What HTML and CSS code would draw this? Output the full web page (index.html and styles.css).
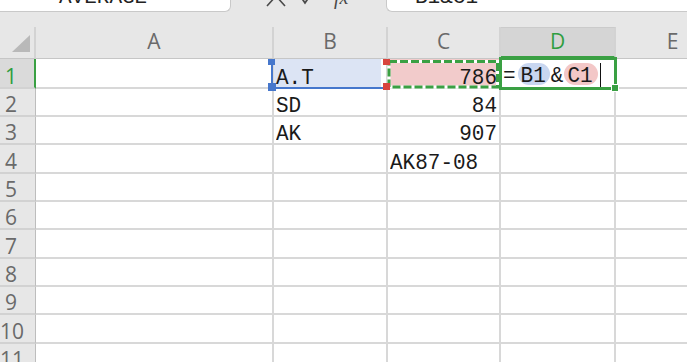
FILE: index.html
```html
<!DOCTYPE html>
<html>
<head>
<meta charset="utf-8">
<link rel="stylesheet" href="styles.css">
</head>
<body>
<div class="app">
  <div class="toolbar">
    <div class="namebox"><span class="tb-text">AVERAGE</span></div>
    <div class="tools">
      <svg class="ico-x" width="24" height="12" viewBox="0 0 24 12"><path d="M3 6 L12 -4 M21 6 L12 -4" stroke="#4a4a4a" stroke-width="1.6" fill="none"/></svg>
      <svg class="ico-ok" width="20" height="12" viewBox="0 0 20 12"><path d="M2 -6 L8 3 L18 -12" stroke="#4a4a4a" stroke-width="1.8" fill="none"/></svg>
      <span class="ico-fx">fx</span>
    </div>
    <div class="fbox"><span class="tb-text">B1&amp;C1</span></div>
  </div>
  <div class="band"></div>
  <div class="sheet">
    <div class="ch corner"><svg width="34" height="31" viewBox="0 0 34 31"><polygon points="12,25 30,25 30,8" fill="#b9b9b9"/></svg></div>
    <div class="ch">A</div>
    <div class="ch">B</div>
    <div class="ch">C</div>
    <div class="ch on">D</div>
    <div class="ch">E</div>

    <div class="rh on"><span>1</span></div>
    <div class="c"></div>
    <div class="c fill-b"><span class="t">A.T</span>
      <svg class="rng rng-b" width="120" height="32" viewBox="0 0 120 32"><rect x="3" y="0" width="2" height="29" fill="#4677cc"/><rect x="0" y="0" width="7" height="6" fill="#4677cc"/><rect x="0" y="24" width="8" height="8" fill="#4677cc"/><rect x="5" y="28" width="110" height="2" fill="#4677cc"/></svg>
    </div>
    <div class="c r fill-r"><span class="t">786</span>
      <svg class="rng rng-r" width="118" height="32" viewBox="0 0 118 32"><rect x="7" y="2.5" width="108.5" height="25.5" fill="none" stroke="#ffffff" stroke-width="3"/><rect x="7" y="2.5" width="108.5" height="25.5" fill="none" stroke="#3aa043" stroke-width="3" stroke-dasharray="8 3"/><rect x="1" y="0" width="7" height="6" fill="#d8453e"/><rect x="1" y="24" width="7" height="7" fill="#d8453e"/></svg>
    </div>
    <div class="c d1">
      <div class="fx-edit">
        <span class="t">=</span>
        <span class="pill blue"><span class="t">B1</span></span>
        <span class="t amp">&amp;</span>
        <span class="pill red"><span class="t">C1</span></span>
        <span class="caret"></span>
      </div>
      <div class="sel"></div>
    </div>
    <div class="c"></div>

    <div class="rh"><span>2</span></div>
    <div class="c"></div>
    <div class="c"><span class="t">SD</span></div>
    <div class="c r"><span class="t">84</span></div>
    <div class="c"></div>
    <div class="c"></div>

    <div class="rh"><span>3</span></div>
    <div class="c"></div>
    <div class="c"><span class="t">AK</span></div>
    <div class="c r"><span class="t">907</span></div>
    <div class="c"></div>
    <div class="c"></div>

    <div class="rh"><span>4</span></div>
    <div class="c"></div>
    <div class="c"></div>
    <div class="c"><span class="t">AK87-08</span></div>
    <div class="c"></div>
    <div class="c"></div>

    <div class="rh"><span>5</span></div>
    <div class="c"></div><div class="c"></div><div class="c"></div><div class="c"></div><div class="c"></div>
    <div class="rh"><span>6</span></div>
    <div class="c"></div><div class="c"></div><div class="c"></div><div class="c"></div><div class="c"></div>
    <div class="rh"><span>7</span></div>
    <div class="c"></div><div class="c"></div><div class="c"></div><div class="c"></div><div class="c"></div>
    <div class="rh"><span>8</span></div>
    <div class="c"></div><div class="c"></div><div class="c"></div><div class="c"></div><div class="c"></div>
    <div class="rh"><span>9</span></div>
    <div class="c"></div><div class="c"></div><div class="c"></div><div class="c"></div><div class="c"></div>
    <div class="rh"><span>10</span></div>
    <div class="c"></div><div class="c"></div><div class="c"></div><div class="c"></div><div class="c"></div>
    <div class="rh"><span>11</span></div>
    <div class="c"></div><div class="c"></div><div class="c"></div><div class="c"></div><div class="c"></div>
  </div>
</div>
</body>
</html>
```

FILE: styles.css
```css
html, body {
  margin: 0;
  padding: 0;
}
body {
  width: 687px;
  height: 362px;
  overflow: hidden;
  background: #e7e7e7;
  font-family: "Open Sans", "Noto Sans", sans-serif;
}
.app {
  width: 687px;
  height: 362px;
  overflow: hidden;
}
.toolbar {
  display: flex;
  height: 12px;
  overflow: hidden;
  background: #e7e7e7;
}
.namebox {
  width: 231px;
  box-sizing: border-box;
  background: #fff;
  border-right: 1px solid #c9c9c9;
  border-bottom: 1px solid #c9c9c9;
  border-bottom-right-radius: 6px;
  display: flex;
  align-items: flex-end;
  padding-left: 59px;
}
.tb-text {
  font: 21px/16px "Liberation Mono", monospace;
  color: #222;
  margin-bottom: 5px;
  white-space: nowrap;
}
.tools {
  width: 155px;
  display: flex;
  align-items: flex-start;
  padding-left: 33px;
  box-sizing: border-box;
}
.ico-x { margin-right: 9px; }
.ico-ok { margin-right: 17px; }
.ico-fx {
  font: italic 20px/16px "Liberation Serif", serif;
  color: #4a4a4a;
  margin-top: -11px;
}
.fbox {
  flex: 1;
  background: #fff;
  border-left: 1px solid #c9c9c9;
  border-bottom: 1px solid #c9c9c9;
  border-bottom-left-radius: 6px;
  display: flex;
  align-items: flex-end;
  padding-left: 28px;
}
.band {
  height: 15px;
}
.sheet {
  display: grid;
  grid-template-columns: 36px 238px 114px 113px 115px 115px;
  grid-template-rows: 32px 30px 28px 28px 29px 28px 28px 29px 28px 28px 29px 28px;
  width: 731px;
  background: #fff;
}
.ch {
  background: #e7e7e7;
  border-right: 2px solid #d3d3d3;
  border-bottom: 1px solid #c6c6c6;
  box-sizing: border-box;
  display: flex;
  align-items: center;
  justify-content: center;
  padding-bottom: 3px;
  font-size: 21px;
  color: #6a6a6a;
}
.ch.corner {
  padding: 0;
  align-items: flex-start;
  justify-content: flex-start;
}
.ch.on {
  background: #d5d5d5;
  color: #2f9e3f;
  border-bottom: 3px solid #3aa043;
  border-top: 1px solid #cbcbcb;
}
.rh {
  background: #e7e7e7;
  border-right: 1px solid #bdbdbd;
  border-bottom: 2px solid #d2d2d2;
  box-sizing: border-box;
  display: flex;
  align-items: flex-end;
  padding-bottom: 3px;
  font-size: 21px;
  line-height: 16px;
  color: #6a6a6a;
}
.rh span {
  width: 22px;
  text-align: center;
}
.rh.on {
  background: #dadada;
  color: #2f9e3f;
  border-right: 2px solid #3aa043;
}
.c {
  position: relative;
  border-right: 2px solid #d8d8d8;
  border-bottom: 2px solid #d8d8d8;
  box-sizing: border-box;
  display: flex;
  align-items: flex-end;
  padding: 0 2px;
  font: 21px/16px "Liberation Mono", monospace;
  color: #1a1a1a;
  white-space: nowrap;
}
.c.r {
  justify-content: flex-end;
}
.t {
  display: inline-block;
  transform: scaleY(1.08);
  transform-origin: 50% 13.6px;
}
.fill-b {
  background: #dce4f4;
  box-shadow: inset -5px 0 0 #fff;
}
.fill-r {
  background: #f2cbcb;
}
.rng {
  position: absolute;
  top: 0;
  z-index: 1;
  overflow: visible;
}
.rng-b { left: -6px; }
.rng-r { left: -6px; }
.fx-edit {
  display: flex;
  align-items: flex-end;
  height: 22px;
  margin-bottom: 2px;
}
.pill {
  height: 22px;
  border-radius: 11px;
  display: flex;
  align-items: flex-end;
  box-sizing: border-box;
}
.pill.blue {
  background: #c8d6f0;
  margin-left: 2px;
  padding: 0 4px 0 3px;
}
.pill.red {
  background: #f3c7c7;
  margin-left: 1px;
  padding: 0 5px 0 3px;
}
.amp {
  margin-left: 1px;
}
.caret {
  width: 1px;
  height: 24px;
  background: #111;
  margin-left: 2px;
  margin-bottom: -2px;
}
.sel {
  position: absolute;
  left: -2px;
  top: -2px;
  right: -3px;
  bottom: -3px;
  border: 3px solid #3aa043;
  box-sizing: border-box;
  z-index: 2;
}
.sel::after {
  content: "";
  position: absolute;
  right: -5px;
  bottom: -5px;
  width: 6px;
  height: 6px;
  background: #3aa043;
  border: 1px solid #fff;
}
```
